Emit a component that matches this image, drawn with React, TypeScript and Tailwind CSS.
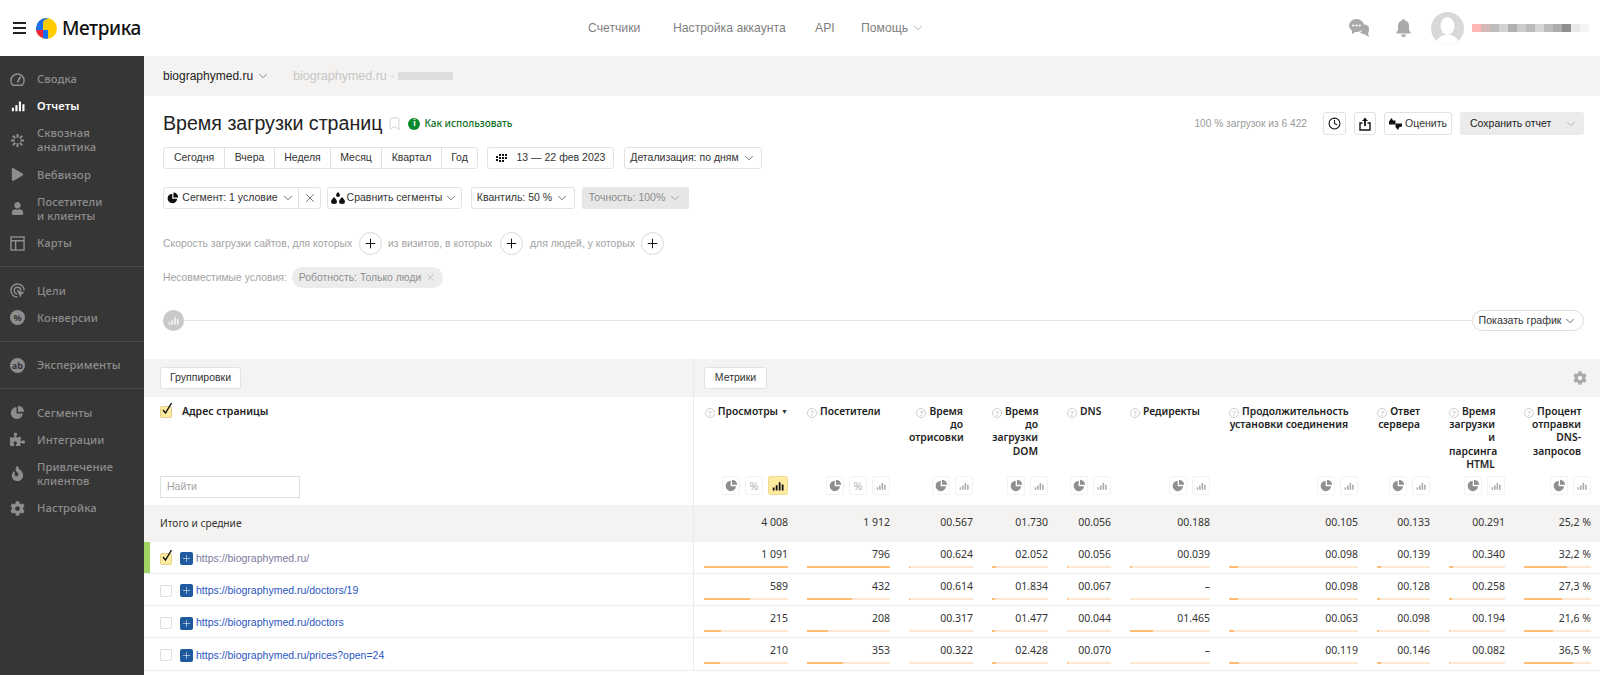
import { Bookmark, ChevronDown, Clock, Plus, X } from "lucide-react";
import { FaCog, FaFire, FaPlay, FaPuzzlePiece, FaUser } from "react-icons/fa";

const gridCols = "grid grid-cols-[550px_103px_102px_83px_75px_63px_99px_148px_72px_75px_86px]";
const btn = "flex items-center justify-center whitespace-nowrap rounded-[3px] border border-[#e2e2e2] bg-white font-['Liberation_Sans',sans-serif] text-[10.5px] text-[#333]";

function PieIcon({ className }: { className?: string }) {
  return (
    <svg viewBox="0 0 16 16" className={className} fill="currentColor">
      <path d="M7 2.2A6.4 6.4 0 1 0 13.6 9H7Z" />
      <path d="M8.6 .8A6.4 6.4 0 0 1 15 7.2H8.6Z" />
    </svg>
  );
}

function BarsIcon({ className }: { className?: string }) {
  return (
    <svg viewBox="0 0 16 16" className={className} fill="currentColor">
      <rect x="1" y="10" width="2.4" height="4" />
      <rect x="5" y="7" width="2.4" height="7" />
      <rect x="9" y="3" width="2.4" height="11" />
      <rect x="13" y="6" width="2.4" height="8" />
    </svg>
  );
}

function Logo() {
  return (
    <svg viewBox="0 0 21 21" className="h-[21px] w-[21px]">
      <circle cx="10.5" cy="10.5" r="10.5" fill="#ffcc00" />
      <path d="M10.5 0A10.5 10.5 0 0 0 0 10.5V12H7V5Q7 1.5 13 .3Z" fill="#1a6ff0" />
      <path d="M0 12H7V20A10.5 10.5 0 0 1 0 12Z" fill="#f0243c" />
      <path d="M7 12H12V20.8A10.5 10.5 0 0 1 7 20Z" fill="#1a6ff0" />
    </svg>
  );
}

function GaugeIcon() {
  return (
    <svg viewBox="0 0 16 16" className="h-[15px] w-[15px]" fill="none" stroke="#8d8d8d" strokeWidth="1.6">
      <path d="M3 14A7 7 0 1 1 13 14Z" />
      <path d="M8 11L11 5" strokeWidth="2" />
    </svg>
  );
}

function ReportIcon() {
  return <BarsIcon className="h-[14px] w-[14px] text-white" />;
}

function SpreadIcon() {
  return (
    <svg viewBox="0 0 16 16" className="h-[15px] w-[15px]" stroke="#8d8d8d" strokeWidth="2.2">
      <path d="M8 1V5M8 11V15M1 8H5M11 8H15M3 3L5.5 5.5M10.5 10.5L13 13M13 3L10.5 5.5M5.5 10.5L3 13" />
    </svg>
  );
}

function MapIcon() {
  return (
    <svg viewBox="0 0 16 16" className="h-[15px] w-[15px]" fill="none" stroke="#8d8d8d" strokeWidth="1.5">
      <rect x="1" y="1" width="14" height="14" />
      <path d="M1 5H15M6 5V15" />
    </svg>
  );
}

function GoalIcon() {
  return (
    <svg viewBox="0 0 16 16" className="h-[15px] w-[15px]" fill="none" stroke="#8d8d8d" strokeWidth="1.5">
      <path d="M8 15A7 7 0 1 1 15 8" />
      <path d="M8 11.5A3.5 3.5 0 1 1 11.5 8" />
      <path d="M7 7L15.5 10.5L12.5 12L11 15.5Z" fill="#8d8d8d" stroke="none" />
    </svg>
  );
}

function BadgeIcon({ label }: { label: string }) {
  return (
    <span className="flex h-[15px] w-[15px] items-center justify-center rounded-full bg-[#8d8d8d] text-[9px] font-bold leading-none text-[#363636]">
      {label}
    </span>
  );
}

const sections = [
  [
    { icon: <GaugeIcon />, label: ["Сводка"] },
    { icon: <ReportIcon />, label: ["Отчеты"], active: true },
    { icon: <SpreadIcon />, label: ["Сквозная", "аналитика"] },
    { icon: <FaPlay className="h-[13px] w-[13px] text-[#8d8d8d]" />, label: ["Вебвизор"] },
    { icon: <FaUser className="h-[13px] w-[13px] text-[#8d8d8d]" />, label: ["Посетители", "и клиенты"] },
    { icon: <MapIcon />, label: ["Карты"] },
  ],
  [
    { icon: <GoalIcon />, label: ["Цели"] },
    { icon: <BadgeIcon label="%" />, label: ["Конверсии"] },
  ],
  [{ icon: <BadgeIcon label="ab" />, label: ["Эксперименты"] }],
  [
    { icon: <PieIcon className="h-[15px] w-[15px] text-[#8d8d8d]" />, label: ["Сегменты"] },
    { icon: <FaPuzzlePiece className="h-[15px] w-[15px] text-[#8d8d8d]" />, label: ["Интеграции"] },
    { icon: <FaFire className="h-[15px] w-[15px] text-[#8d8d8d]" />, label: ["Привлечение", "клиентов"] },
    { icon: <FaCog className="h-[15px] w-[15px] text-[#8d8d8d]" />, label: ["Настройка"] },
  ],
];

function Sidebar() {
  return (
    <aside className="w-[144px] shrink-0 bg-[#363636] pt-[9.5px] font-['Noto_Sans',sans-serif] text-[11.2px] font-medium leading-[14px] tracking-[0.1px] text-[#8d8d8d]">
      {sections.map((items, i) => (
        <div key={i} className={i > 0 ? "mt-[9.5px] border-t border-[#4a4a4a] pt-[10px]" : ""}>
          {items.map((item) => (
            <div
              key={item.label[0]}
              className={`flex items-center ${item.label.length > 1 ? "h-[41.5px]" : "h-[27px]"} ${item.active ? "font-semibold text-white" : ""}`}
            >
              <span className="flex w-[37px] shrink-0 justify-center pl-[2px] pr-[4px]">{item.icon}</span>
              <span>
                {item.label.map((l) => (
                  <div key={l}>{l}</div>
                ))}
              </span>
            </div>
          ))}
        </div>
      ))}
    </aside>
  );
}

function Header() {
  const blocks = ["bg-[#ffb5b5]", "bg-[#d6b8b8]", "bg-[#bdbdbd]", "bg-[#d2d2d2]", "bg-[#b0b0b0]", "bg-[#cbcbcb]", "bg-[#bbbbbb]", "bg-[#d5d5d5]", "bg-[#bcbcbc]", "bg-[#adadad]", "bg-[#8f8f8f]", "bg-[#e9e9e9]", "bg-[#f4f4f4]"];
  return (
    <header className="flex h-[56px] shrink-0 items-center bg-white">
      <div className="ml-[13px] flex w-[13px] flex-col gap-[3px]">
        <span className="h-[2px] bg-[#222]" />
        <span className="h-[2px] bg-[#222]" />
        <span className="h-[2px] bg-[#222]" />
      </div>
      <div className="ml-[10px]">
        <Logo />
      </div>
      <span className="ml-[5px] w-[80px] font-['Noto_Sans',sans-serif] text-[19px] font-medium tracking-[-0.4px] text-[#111]">Метрика</span>
      <nav className="ml-[446px] flex items-center text-[12.2px] text-[#7f7f7f]">
        <span className="w-[85px]">Счетчики</span>
        <span className="w-[142px]">Настройка аккаунта</span>
        <span className="w-[46px]">API</span>
        <span className="flex w-[60px] items-center gap-[3px] whitespace-nowrap">
          Помощь <ChevronDown className="h-[14px] w-[14px] shrink-0" strokeWidth={1} />
        </span>
      </nav>
      <svg viewBox="0 0 20 18" className="ml-[428px] h-[18px] w-[20px] text-[#a9a9a9]" fill="currentColor">
        <path d="M13 7A4 4 0 0 1 20 10Q20 13 19 14L20 18L16 15.5L11 14Q14 12 13 7Z" />
        <ellipse cx="7.5" cy="6.5" rx="7.5" ry="6.5" />
        <path d="M3 10V15L8 12Z" />
        <circle cx="4.2" cy="6.5" r="1.1" fill="#fff" />
        <circle cx="7.5" cy="6.5" r="1.1" fill="#fff" />
        <circle cx="10.8" cy="6.5" r="1.1" fill="#fff" />
      </svg>
      <svg viewBox="0 0 15 18" className="ml-[27px] h-[18px] w-[15px] text-[#a9a9a9]" fill="currentColor">
        <path d="M7.5 0Q9 0 9 1.5Q13 2.5 13 7V11L15 14.5H0L2 11V7Q2 2.5 6 1.5Q6 0 7.5 0Z" />
        <path d="M5 15.5H10Q10 18 7.5 18Q5 18 5 15.5Z" />
      </svg>
      <svg viewBox="0 0 33 33" className="ml-[20px] h-[33px] w-[33px]">
        <defs>
          <clipPath id="ava">
            <circle cx="16.5" cy="16.5" r="16.5" />
          </clipPath>
        </defs>
        <g clipPath="url(#ava)">
          <rect width="33" height="33" fill="#d8d8d8" />
          <ellipse cx="16.5" cy="14" rx="7" ry="9" fill="#fff" />
          <path d="M4 33Q6 25 13 23H20Q27 25 29 33Z" fill="#fff" />
        </g>
      </svg>
      <div className="ml-[8px] flex h-[8px]">
        {blocks.map((c) => (
          <span key={c} className={`h-full w-[9px] ${c}`} />
        ))}
      </div>
    </header>
  );
}

function Toolbar() {
  return (
    <div className="pl-[19px] pr-[16px]">
      <div className="flex h-[23px] items-center justify-between">
        <div className="flex items-center">
          <h1 className="whitespace-nowrap text-[19.6px] leading-[23px] text-[#222]">Время загрузки страниц</h1>
          <Bookmark className="ml-[5px] h-[19px] w-[15px] text-[#d2d2d2]" strokeWidth={1.5} />
          <span className="ml-[6px] flex h-[12px] w-[12px] items-center justify-center rounded-full bg-[#0a8a2a] text-[9px] font-bold leading-none text-white">i</span>
          <span className="ml-[4px] whitespace-nowrap font-['Noto_Sans',sans-serif] text-[10px] font-medium text-[#0e6f24]">Как использовать</span>
        </div>
        <div className="flex items-center">
          <span className="whitespace-nowrap text-[10.2px] text-[#9a9a9a]">100 % загрузок из 6 422</span>
          <div className={`${btn} ml-[16px] h-[23px] w-[23px]`}>
            <Clock className="h-[13px] w-[13px] text-[#111]" strokeWidth={2} />
          </div>
          <div className={`${btn} ml-[8px] h-[23px] w-[22px]`}>
            <svg viewBox="0 0 12 14" className="h-[14px] w-[12px]" fill="none" stroke="#111" strokeWidth="1.4">
              <path d="M3.5 6H1V13H11V6H8.5" />
              <path d="M6 9V1.5" strokeWidth="1.8" />
              <path d="M3 4L6 .8L9 4Z" fill="#111" stroke="none" />
            </svg>
          </div>
          <div className={`${btn} ml-[8px] h-[23px] w-[68px] gap-[3px]`}>
            <svg viewBox="0 0 13 12" className="h-[12px] w-[13px]" fill="#111">
              <path d="M0 3.5L2.5 0L4 2.5H6.5V6.5H0Z" />
              <path d="M6.5 5.5H13V8.5L10.5 9L9 12L6.5 9Z" />
            </svg>
            Оценить
          </div>
          <div className="ml-[8px] flex h-[23px] w-[124px] items-center justify-between whitespace-nowrap rounded-[3px] bg-[#ebebeb] pl-[10px] pr-[6px] text-[10.5px] text-[#222]">
            Сохранить отчет
            <ChevronDown className="h-[14px] w-[14px] text-[#8a8a8a]" strokeWidth={1} />
          </div>
        </div>
      </div>

      <div className="mt-[12px] flex h-[22px] items-stretch">
        <div className="flex rounded-[3px] border border-[#e2e2e2] text-[10.5px] text-[#333]">
          <span className="flex w-[60px] items-center justify-center">Сегодня</span>
          <span className="flex w-[50px] items-center justify-center border-l border-[#e2e2e2]">Вчера</span>
          <span className="flex w-[56px] items-center justify-center border-l border-[#e2e2e2]">Неделя</span>
          <span className="flex w-[51px] items-center justify-center border-l border-[#e2e2e2]">Месяц</span>
          <span className="flex w-[60px] items-center justify-center border-l border-[#e2e2e2]">Квартал</span>
          <span className="flex w-[36px] items-center justify-center border-l border-[#e2e2e2]">Год</span>
        </div>
        <div className={`${btn} ml-[9px] w-[127px] gap-[8px]`}>
          <svg viewBox="0 0 13 10" className="h-[10px] w-[13px]" fill="#111">
            <path d="M0 3H2V5H0ZM3 1H5V3H3ZM3 4H5V6H3ZM3 7H5V9H3ZM0 6H2V8H0ZM6 1H8V3H6ZM6 4H8V6H6ZM6 7H8V9H6ZM9 1H11V3H9ZM9 4H11V6H9Z" />
          </svg>
          13 — 22 фев 2023
        </div>
        <div className={`${btn} ml-[10px] w-[138px] gap-[3px]`}>
          Детализация: по дням
          <ChevronDown className="h-[14px] w-[14px]" strokeWidth={1.2} />
        </div>
      </div>

      <div className="mt-[18px] flex h-[22px] items-stretch">
        <div className="flex whitespace-nowrap rounded-[3px] border border-[#e2e2e2] text-[10.5px] text-[#333]">
          <span className="flex w-[134px] items-center justify-center gap-[3px]">
            <PieIcon className="h-[12px] w-[12px] text-[#111]" />
            Сегмент: 1 условие
            <ChevronDown className="h-[14px] w-[14px]" strokeWidth={1.2} />
          </span>
          <span className="flex w-[22px] items-center justify-center border-l border-[#e2e2e2]">
            <X className="h-[14px] w-[14px]" strokeWidth={1.2} />
          </span>
        </div>
        <div className={`${btn} ml-[6px] w-[135px] gap-[2px]`}>
          <svg viewBox="0 0 14 12" className="h-[12px] w-[14px]" fill="#111">
            <path d="M3 5Q6 8 6 9.5A3 2.5 0 0 1 0 9.5Q0 8 3 5Z" />
            <path d="M11 5Q14 8 14 9.5A3 2.5 0 0 1 8 9.5Q8 8 11 5Z" />
            <path d="M7 0Q9 2 9 3A2 2 0 0 1 5 3Q5 2 7 0Z" />
          </svg>
          Сравнить сегменты
          <ChevronDown className="h-[14px] w-[14px]" strokeWidth={1.2} />
        </div>
        <div className={`${btn} ml-[9px] w-[104px] gap-[3px]`}>
          Квантиль: 50 %
          <ChevronDown className="h-[14px] w-[14px]" strokeWidth={1.2} />
        </div>
        <div className="ml-[7px] flex w-[107px] items-center justify-center gap-[3px] whitespace-nowrap rounded-[2px] bg-[#e6e6e6] text-[10.5px] text-[#8a8a8a]">
          Точность: 100%
          <ChevronDown className="h-[14px] w-[14px]" strokeWidth={1.2} />
        </div>
      </div>

      <div className="mt-[23px] flex h-[23px] items-center whitespace-nowrap text-[10.4px] text-[#a3a3a3]">
        <span className="w-[196px]">Скорость загрузки сайтов, для которых</span>
        <PlusCircle />
        <span className="ml-[6px] w-[112px]">из визитов, в которых</span>
        <PlusCircle />
        <span className="ml-[7px] w-[111px]">для людей, у которых</span>
        <PlusCircle />
      </div>

      <div className="mt-[12px] flex h-[21px] items-center whitespace-nowrap text-[10.4px] text-[#a3a3a3]">
        <span className="w-[129px]">Несовместимые условия:</span>
        <span className="flex h-[21px] w-[151px] items-center justify-center gap-[4px] rounded-full bg-[#ececec] text-[#8f8f8f]">
          Роботность: Только люди
          <X className="h-[11px] w-[11px]" strokeWidth={1} />
        </span>
      </div>

      <div className="mt-[22px] flex h-[21px] items-center">
        <span className="flex h-[21px] w-[21px] items-center justify-center rounded-full bg-[#c9c9c9]">
          <BarsIcon className="h-[11px] w-[11px] text-[#f2f2f2]" />
        </span>
        <span className="h-[1px] flex-1 bg-[#e2e2e2]" />
        <span className="flex h-[21px] w-[112px] items-center justify-center gap-[2px] whitespace-nowrap rounded-full border border-[#dcdcdc] text-[10.6px] text-[#333]">
          Показать график
          <ChevronDown className="h-[14px] w-[14px]" strokeWidth={1.2} />
        </span>
      </div>
    </div>
  );
}

function PlusCircle() {
  return (
    <span className="flex h-[23px] w-[23px] shrink-0 items-center justify-center rounded-full border border-[#d8d8d8] bg-white">
      <Plus className="h-[15px] w-[15px] text-[#111]" strokeWidth={1.6} />
    </span>
  );
}

function HelpIcon() {
  return (
    <span className="mr-[3px] inline-flex h-[10px] w-[10px] items-center justify-center rounded-full border border-[#cfcfcf] align-[-1px] text-[7px] font-normal leading-none text-[#bdbdbd]">
      ?
    </span>
  );
}

const metrics = [
  { lines: ["Просмотры"], sorted: true, percent: true },
  { lines: ["Посетители"], percent: true },
  { lines: ["Время", "до", "отрисовки"] },
  { lines: ["Время", "до", "загрузки", "DOM"] },
  { lines: ["DNS"] },
  { lines: ["Редиректы"] },
  { lines: ["Продолжительность", "установки соединения"] },
  { lines: ["Ответ", "сервера"] },
  { lines: ["Время", "загрузки", "и", "парсинга", "HTML"] },
  { lines: ["Процент", "отправки", "DNS-", "запросов"] },
];

const totals = ["4 008", "1 912", "00.567", "01.730", "00.056", "00.188", "00.105", "00.133", "00.291", "25,2 %"];

const rows = [
  {
    url: "https://biographymed.ru/",
    checked: true,
    values: ["1 091", "796", "00.624", "02.052", "00.056", "00.039", "00.098", "00.139", "00.340", "32,2 %"],
    bars: [100, 100, 2, 7, 3, 3, 7, 7, 7, 64],
  },
  {
    url: "https://biographymed.ru/doctors/19",
    values: ["589", "432", "00.614", "01.834", "00.067", "–", "00.098", "00.128", "00.258", "27,3 %"],
    bars: [55, 54, 2, 6, 3, 0, 7, 6, 5, 56],
  },
  {
    url: "https://biographymed.ru/doctors",
    values: ["215", "208", "00.317", "01.477", "00.044", "01.465", "00.063", "00.098", "00.194", "21,6 %"],
    bars: [20, 25, 0, 5, 0, 29, 4, 4, 2, 43],
  },
  {
    url: "https://biographymed.ru/prices?open=24",
    values: ["210", "353", "00.322", "02.428", "00.070", "–", "00.119", "00.146", "00.082", "36,5 %"],
    bars: [19, 43, 0, 8, 3, 0, 8, 8, 2, 73],
  },
];

function CheckBox({ checked }: { checked?: boolean }) {
  return (
    <span className={`relative block h-[12px] w-[12px] shrink-0 rounded-[2px] border ${checked ? "border-[#e3d08a] bg-[#ffeb9e]" : "border-[#dedede] bg-white"}`}>
      {checked && (
        <svg viewBox="0 0 12 14" className="absolute left-[0px] top-[-5px] h-[14px] w-[12px]" fill="none" stroke="#111" strokeWidth="1.4">
          <path d="M2 8L4.5 11L10.5 1" />
        </svg>
      )}
    </span>
  );
}

function HeaderIcons({ percent, sorted }: { percent?: boolean; sorted?: boolean }) {
  const box = "flex h-[19px] w-[18px] items-center justify-center rounded-[2px] border border-[#f3f3f3]";
  return (
    <div className="flex justify-end gap-[5px]">
      <span className={box}>
        <PieIcon className="h-[13px] w-[13px] text-[#8f8f8f]" />
      </span>
      {percent && <span className={`${box} text-[11px] font-light text-[#9a9a9a]`}>%</span>}
      <span className={sorted ? "flex h-[19px] w-[20px] items-center justify-center rounded-[2px] border border-[#efdc94] bg-[#ffeb9e]" : box}>
        <BarsIcon className={sorted ? "h-[12px] w-[12px] text-[#111]" : "h-[10px] w-[10px] text-[#a8a8a8]"} />
      </span>
    </div>
  );
}

function ReportTable() {
  return (
    <div className="mt-[28px] font-['Noto_Sans',sans-serif]">
      <div className="flex h-[38px] items-center bg-[#f4f3f1]">
        <div className="flex h-full w-[550px] items-center border-r border-[#ebebeb] pl-[16px]">
          <div className={`${btn} h-[22px] w-[81px]`}>Группировки</div>
        </div>
        <div className={`${btn} ml-[10px] h-[22px] w-[63px]`}>Метрики</div>
        <FaCog className="ml-auto mr-[13px] h-[14px] w-[14px] text-[#a9a9a9]" />
      </div>

      <div className={`${gridCols} h-[108px] text-[10.3px] font-semibold leading-[13.4px] text-[#222]`}>
        <div className="flex flex-col justify-between border-r border-[#ebebeb] pb-[7px] pl-[16px] pt-[8px]">
          <div className="flex items-center gap-[10px]">
            <CheckBox checked />
            <span className="text-[10.5px]">Адрес страницы</span>
          </div>
          <div className="flex h-[22px] w-[140px] items-center border border-[#e0e0e0] pl-[6px] font-['Liberation_Sans',sans-serif] text-[10.5px] font-normal text-[#a5a5a5]">Найти</div>
        </div>
        {metrics.map((m) => (
          <div key={m.lines[0] + m.lines.length} className="flex flex-col justify-between pb-[10px] pl-[10px] pr-[9px] pt-[7.5px]">
            <div className="relative pr-[10px] text-right">
              {m.lines.map((line, i) => (
                <div key={line} className="whitespace-nowrap">
                  {i === 0 && <HelpIcon />}
                  {line}
                </div>
              ))}
              {m.sorted && <span className="absolute right-[0px] top-[0px] text-[7px] text-[#333]">▼</span>}
            </div>
            <HeaderIcons percent={m.percent} sorted={m.sorted} />
          </div>
        ))}
      </div>

      <div className={`${gridCols} h-[36.5px] items-center bg-[#f4f3f1] text-[10.5px] text-[#333]`}>
        <div className="flex h-full items-center border-r border-[#ebebeb] pl-[16px] text-[10.2px]">Итого и средние</div>
        {totals.map((v, i) => (
          <div key={i} className="pr-[9px] text-right">
            {v}
          </div>
        ))}
      </div>

      {rows.map((row) => (
        <div key={row.url} className={`${gridCols} h-[32.25px] border-b border-[#eeeeee] text-[10.5px] text-[#333]`}>
          <div className={`flex h-full items-center border-r border-[#ebebeb] pl-[10px] pt-[3px] ${row.checked ? "border-l-[6px] border-l-[#a2d365]" : "border-l-[6px] border-l-white"}`}>
            <CheckBox checked={row.checked} />
            <span className="ml-[8px] flex h-[13px] w-[13px] items-center justify-center rounded-[2px] bg-[#1f5a9e]">
              <Plus className="h-[11px] w-[11px] text-white" strokeWidth={1.2} />
            </span>
            <span className={`ml-[3px] font-['Liberation_Sans',sans-serif] text-[10.5px] ${row.checked ? "text-[#7a7aa0]" : "text-[#2a56c0]"}`}>{row.url}</span>
          </div>
          {row.values.map((v, i) => (
            <div key={i} className="pl-[10px] pr-[9px] pt-[6px]">
              <div className="h-[13px] text-right leading-[13px]">{v}</div>
              <div className="mt-[5px] h-[2px] bg-[#ffe8d1]">
                <div className="h-full bg-[#ffbd75]" style={{ width: `${row.bars[i]}%` }} />
              </div>
            </div>
          ))}
        </div>
      ))}
    </div>
  );
}

export default function App() {
  return (
    <div className="flex h-[675px] w-[1600px] flex-col overflow-hidden bg-white font-['Liberation_Sans',sans-serif]">
      <Header />
      <div className="flex min-h-0 flex-1">
        <Sidebar />
        <main className="min-w-0 flex-1">
          <div className="flex h-[40px] items-center bg-[#f4f3f1] pl-[19px] text-[12.5px]">
            <span className="flex w-[130px] items-center gap-[3px] text-[12px] text-[#222]">
              biographymed.ru
              <ChevronDown className="h-[14px] w-[14px] text-[#444]" strokeWidth={1} />
            </span>
            <span className="text-[#c6c6c6]">biographymed.ru ·</span>
            <span className="ml-[4px] h-[8px] w-[55px] bg-[#dedddb]" />
          </div>
          <div className="pt-[16px]">
            <Toolbar />
          </div>
          <ReportTable />
        </main>
      </div>
    </div>
  );
}
